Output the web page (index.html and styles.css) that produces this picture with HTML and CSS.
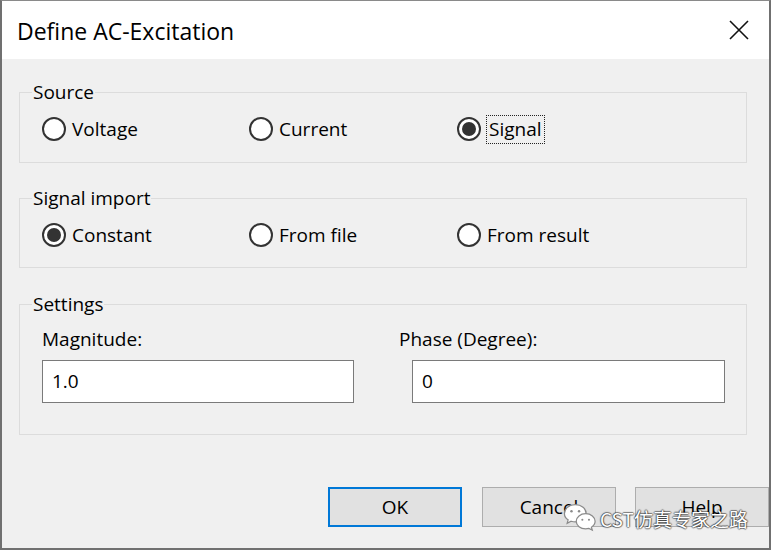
FILE: index.html
```html
<!DOCTYPE html>
<html>
<head>
<meta charset="utf-8">
<link rel="stylesheet" href="styles.css">
</head>
<body>
<div class="window">
  <header class="titlebar">
    <span class="title">Define AC-Excitation</span>
    <svg class="close" width="20" height="20" viewBox="0 0 20 20"><path d="M1 1 L19 19 M19 1 L1 19" stroke="#111" stroke-width="1.6" fill="none"/></svg>
  </header>
  <main class="content">
    <fieldset class="group group-radio">
      <legend>Source</legend>
      <div class="radios">
        <label class="radio"><span class="dot"></span><span class="rtext">Voltage</span></label>
        <label class="radio"><span class="dot"></span><span class="rtext">Current</span></label>
        <label class="radio checked"><span class="dot"></span><span class="rtext focus">Signal</span></label>
      </div>
    </fieldset>
    <fieldset class="group group-radio second">
      <legend>Signal import</legend>
      <div class="radios">
        <label class="radio checked"><span class="dot"></span><span class="rtext">Constant</span></label>
        <label class="radio"><span class="dot"></span><span class="rtext">From file</span></label>
        <label class="radio"><span class="dot"></span><span class="rtext">From result</span></label>
      </div>
    </fieldset>
    <fieldset class="group settings">
      <legend>Settings</legend>
      <div class="fields">
        <div class="field">
          <div class="flabel">Magnitude:</div>
          <div class="input">1.0</div>
        </div>
        <div class="field phase">
          <div class="flabel">Phase (Degree):</div>
          <div class="input">0</div>
        </div>
      </div>
    </fieldset>
    <div class="buttons">
      <button class="btn default">OK</button>
      <button class="btn">Cancel</button>
      <button class="btn">Help</button>
    </div>
  </main>
  <div class="watermark">
    <svg class="wx" width="34" height="30" viewBox="0 0 36 30">
      <path d="M13 2 C6.4 2 1.5 6.2 1.5 11.2 C1.5 14 3 16.4 5.4 18 L4.4 21.6 L8.6 19.5 C10 19.9 11.4 20.2 13 20.2 C19.6 20.2 24.5 16 24.5 11.2 C24.5 6.2 19.6 2 13 2 Z" fill="#fff" stroke="#8a8a8a" stroke-width="1.3"/>
      <path d="M24 11.5 C18.4 11.5 14 15.2 14 19.6 C14 24 18.4 27.6 24 27.6 C25.2 27.6 26.4 27.4 27.4 27.1 L31 28.9 L30.1 25.8 C32.4 24.3 34 22.1 34 19.6 C34 15.2 29.6 11.5 24 11.5 Z" fill="#fff" stroke="#8a8a8a" stroke-width="1.3"/>
      <circle cx="9" cy="9" r="1.3" fill="#8a8a8a"/>
      <circle cx="17" cy="9" r="1.3" fill="#8a8a8a"/>
      <circle cx="20.5" cy="18" r="1.1" fill="#8a8a8a"/>
      <circle cx="27.5" cy="18" r="1.1" fill="#8a8a8a"/>
    </svg>
    <span class="wtext">CST仿真专家之路</span>
  </div>
</div>
</body>
</html>
```
FILE: styles.css
```css
* { box-sizing: border-box; }
html, body { margin: 0; padding: 0; background: #fff; }
body {
  font-family: "Open Sans", "Noto Sans", sans-serif;
  font-size: 19px;
  color: #000;
  width: 772px;
  height: 552px;
  overflow: hidden;
}
.window {
  position: relative;
  width: 771px;
  height: 550px;
  border: 2px solid #707070;
  border-top: 1px solid #8a8a8a;
  background: #f0f0f0;
  display: flex;
  flex-direction: column;
}
.titlebar {
  height: 58px;
  background: #fff;
  display: flex;
  align-items: center;
  justify-content: space-between;
  padding: 0 20px 0 15px;
  flex: none;
}
.title {
  font-size: 23px;
  color: #000;
  margin-top: 2px;
}
.close { display: block; }
.content {
  flex: 1;
  display: flex;
  flex-direction: column;
  padding-top: 21px;
}
.group {
  margin: 0 22px 0 17px;
  border: 1px solid #dcdcdc;
  padding: 13px 0 21px 12px;
  min-width: 0;
}
.group legend {
  padding: 0 1px;
  line-height: 24px;
  font-size: 19px;
  color: #000;
}
.group.second { margin-top: 23px; padding-bottom: 20px; }
.radios {
  display: grid;
  grid-template-columns: 207px 208px auto;
  margin-left: 10px;
  height: 24px;
}
.radio {
  display: flex;
  align-items: center;
  height: 24px;
}
.dot {
  position: relative;
  width: 24px;
  height: 24px;
  border: 2px solid #333;
  border-radius: 50%;
  background: #fff;
  margin-right: 6px;
  flex: none;
}
.checked .dot::after {
  content: "";
  position: absolute;
  left: 3px;
  top: 3px;
  width: 14px;
  height: 14px;
  border-radius: 50%;
  background: #333;
}
.rtext { line-height: 24px; }
.focus {
  border: 1px dotted #222;
  padding: 1px 2px 2px 2px;
  margin-left: -1px;
  line-height: 24px;
}
.settings {
  margin-top: 24px;
  padding: 11px 0 31px 12px;
}
.fields {
  display: grid;
  grid-template-columns: 357px 326px;
  margin-left: 10px;
}
.flabel { line-height: 24px; }
.input {
  margin-top: 9px;
  height: 43px;
  background: #fff;
  border: 1px solid #7a7a7a;
  padding: 0 9px;
  line-height: 40px;
}
.field:first-child .input { width: 312px; }
.phase .input { width: 313px; margin-left: 13px; }
.buttons {
  margin-top: 52px;
  display: flex;
  justify-content: flex-end;
  gap: 19px;
  padding-right: 0;
}
.btn {
  width: 134px;
  height: 40px;
  background: #e1e1e1;
  border: 1px solid #adadad;
  font-family: "Open Sans", "Noto Sans", sans-serif;
  font-size: 19px;
  color: #000;
  padding: 0;
}
.btn.default {
  border: 2px solid #0078d7;
  margin-right: 1px;
}
.watermark {
  position: absolute;
  left: 561px;
  top: 500px;
  display: flex;
  align-items: center;
  gap: 3px;
}
.wx { display: block; }
.wtext {
  font-family: "Noto Sans CJK SC", "Noto Sans", sans-serif;
  font-size: 19px;
  color: #fff;
  margin-top: 4px;
  text-shadow: 1px 0 1px rgba(0,0,0,.45), -1px 0 1px rgba(0,0,0,.45), 0 1px 1px rgba(0,0,0,.45), 0 -1px 1px rgba(0,0,0,.45);
}
```
